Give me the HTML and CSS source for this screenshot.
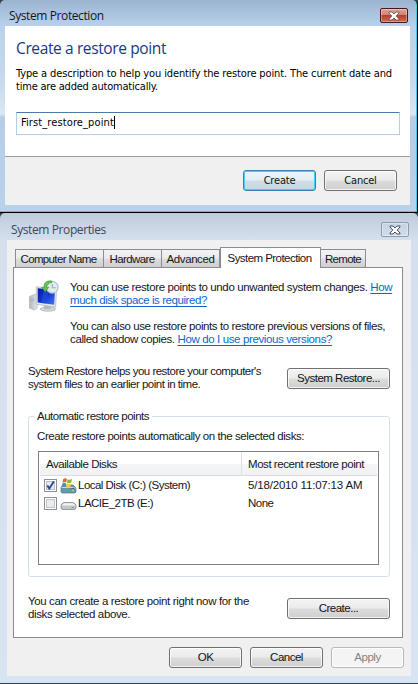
FILE: index.html
```html
<!DOCTYPE html>
<html lang="en">
<head>
<meta charset="utf-8">
<title>System Protection</title>
<link rel="stylesheet" href="styles.css">
</head>
<body>
<section class="dialog">
  <header class="titlebar">
    <span class="title">System Protection</span>
    <span class="close close-red"><svg width="12" height="10" viewBox="0 0 12 10"><path d="M1 1h3l2 2 2-2h3v1L8.200 5 11 8v1H8L6 7 4 9H1V8l2.800-3L1 2z" fill="#fff" stroke="#644c50" stroke-width=".8"/></svg></span>
  </header>
  <div class="dialog-body">
    <h1>Create a restore point</h1>
    <p class="intro"><span class="intro-a">Type a description to help you identify the restore point. The current date and</span><span class="intro-b">time are added automatically.</span></p>
    <div class="field"><span>First_restore_point</span><i class="caret"></i></div>
  </div>
  <footer class="dialog-foot">
    <button class="btn primary">Create</button>
    <button class="btn">Cancel</button>
  </footer>
</section>
<section class="props">
  <header class="titlebar inactive">
    <span class="title">System Properties</span>
    <span class="close"><svg width="12" height="10" viewBox="0 0 12 10"><path d="M1 1h3l2 2 2-2h3v1L8.200 5 11 8v1H8L6 7 4 9H1V8l2.800-3L1 2z" fill="#fff" stroke="#3f4a5a" stroke-width=".95"/></svg></span>
  </header>
  <div class="client">
    <nav class="tabs">
      <span class="tab tab-name">Computer Name</span><span class="tab tab-hw">Hardware</span><span class="tab tab-adv">Advanced</span><span class="tab active">System Protection</span><span class="tab tab-rem">Remote</span>
    </nav>
    <main class="panel">
      <div class="about">
        <svg class="restore-icon" width="32" height="32" viewBox="0 0 32 33">
          <defs>
            <linearGradient id="scr" x1="0" y1="0" x2="1" y2="1"><stop offset="0" stop-color="#0719a0"/><stop offset=".5" stop-color="#1237d2"/><stop offset="1" stop-color="#477cf0"/></linearGradient>
            <linearGradient id="cs" x1="0" y1="0" x2="1" y2="0"><stop offset="0" stop-color="#b4b8bc"/><stop offset="1" stop-color="#e5e7e9"/></linearGradient>
          </defs>
          <path d="M1 17l8-3v15l-3 2-5-2z" fill="url(#cs)" stroke="#a5aaae" stroke-width=".6"/>
          <path d="M2 20l4-1M2 22l4-1" stroke="#8b9094" stroke-width=".5"/>
          <ellipse cx="20" cy="30" rx="8" ry="2.200" fill="#d3d7da" stroke="#9aa1a7" stroke-width=".6"/>
          <path d="M16 26h7v4h-7z" fill="#b5babf"/>
          <path d="M8 7l21 2-1 19L8 25z" fill="#e2e7ea" stroke="#a9b2b9" stroke-width=".7"/>
          <path d="M9.500 8.500l17.800 1.800-.8 15.300L9.500 23.200z" fill="url(#scr)"/>
          <path d="M16 9.200l5 .6-3 14.400-5-.6z" fill="#274fdd" opacity=".55"/>
          <circle cx="24.500" cy="7.500" r="6" fill="#e2ebef" stroke="#b4c4cd" stroke-width="1.300"/>
          <path d="M24.500 4v4h3.500" fill="none" stroke="#8fa7b6" stroke-width="1"/>
          <path d="M24 1C18 0 15.500 4 16 7.500h-2.500l3.700 4.500 3.800-4.500h-2.500C19 5 21 3 24 2.500z" fill="#62c452" stroke="#35912f" stroke-width=".6"/>
        </svg>
        <div class="about-text">
          <p><span class="u1">You can use restore points to undo unwanted system changes. <a>How</a></span><span class="u2"><a>much disk space is required?</a></span></p>
          <p><span class="u3">You can also use restore points to restore previous versions of files,</span><span class="u4">called shadow copies. <a>How do I use previous versions?</a></span></p>
        </div>
      </div>
      <div class="action">
        <p><span class="s1">System Restore helps you restore your computer's</span><span class="s2">system files to an earlier point in time.</span></p>
        <button class="btn wide">System Restore...</button>
      </div>
      <fieldset class="group">
        <legend>Automatic restore points</legend>
        <p class="group-note">Create restore points automatically on the selected disks:</p>
        <div class="list">
          <div class="row head"><span>Available Disks</span><span>Most recent restore point</span></div>
          <div class="row">
            <span class="disk"><svg class="check" width="13" height="13" viewBox="0 0 13 13"><rect x=".5" y=".5" width="12" height="12" fill="#fff" stroke="#8e8f8f"/><rect x="2.500" y="2.500" width="8" height="8" fill="#e5ebf2" stroke="#b6bfca"/><path d="M3.300 6.500l2 3 4.500-7" fill="none" stroke="#2d4792" stroke-width="1.900"/></svg><svg class="drive" width="17" height="17" viewBox="0 0 17 17"><path d="M1 10l2-2h10l3 3v4l-1 1H2l-1-1z" fill="#6797ab" stroke="#49788e" stroke-width=".7"/><path d="M1.500 10.500h12l2 1" stroke="#bddce5" stroke-width="1"/><path d="M3 2.500Q5 .5 7 2L6.300 5.500Q4.500 4.500 2.400 6z" fill="#e96a31"/><path d="M7.600 2.300Q10 3.600 12 1.800L11.300 5.600Q9 7 6.900 5.700z" fill="#7eba3f"/><path d="M2.300 6.700Q4.400 5.200 6.100 6.300L5.300 10Q3.500 8.600 1.500 10z" fill="#4390cf"/><path d="M6.700 6.500Q9 7.700 11.100 6.400L10.300 10.200Q8 11.300 5.900 10z" fill="#f6c93b"/><path d="M12 13.500h2" stroke="#8ee454" stroke-width="1.300"/></svg><span>Local Disk (C:) (System)</span></span>
            <span class="date">5/18/2010 11:07:13 AM</span>
          </div>
          <div class="row">
            <span class="disk"><svg class="check" width="13" height="13" viewBox="0 0 13 13"><rect x=".5" y=".5" width="12" height="12" fill="#fff" stroke="#8e8f8f"/><rect x="2.500" y="2.500" width="8" height="8" fill="#e9ebed" stroke="#c2c5c9"/></svg><svg class="drive" width="17" height="17" viewBox="0 0 17 17"><path d="M1 10.500Q1 9 4 7.500h9q3 1.500 3 3v2q0 2-2 2H3q-2 0-2-2z" fill="#c4c7c9" stroke="#84898c" stroke-width=".8"/><path d="M1.800 10.500Q2 9.500 4.300 8.300h8.400q2.300 1.200 2.500 2.200z" fill="#f1f2f2"/><path d="M11.500 12.500h2.500" stroke="#75a958" stroke-width="1"/></svg><span>LACIE_2TB (E:)</span></span>
            <span>None</span>
          </div>
        </div>
      </fieldset>
      <div class="action bottom">
        <p><span class="c1">You can create a restore point right now for the</span><span class="c1">disks selected above.</span></p>
        <button class="btn wide">Create...</button>
      </div>
    </main>
    <footer class="props-foot">
      <button class="btn">OK</button>
      <button class="btn">Cancel</button>
      <button class="btn disabled" disabled>Apply</button>
    </footer>
  </div>
</section>
</body>
</html>
```
FILE: styles.css
```css
* { box-sizing: border-box; }
body { margin: 0; width: 418px; height: 684px; overflow: hidden; background: #33404f; color: #15151c; }
p, h1, fieldset, legend { margin: 0; padding: 0; border: 0; }
p > span { display: block; white-space: nowrap; }

.titlebar { display: flex; justify-content: space-between; }
.title { font: 12px/16px "Open Sans", sans-serif; letter-spacing: -0.4px; white-space: nowrap; }
.close { display: flex; align-items: center; justify-content: center; width: 28px; height: 15px; border: 1px solid #8795a8; border-radius: 2px; box-shadow: inset 0 0 0 1px rgba(255,255,255,.35); }
.close-red { border-color: #48161b; background: linear-gradient(#dfa398, #d38172 47%, #b5402c 50%, #cd6a50); }

.dialog { height: 213px; padding: 0 7px 6px 5px; border-right: 1px solid #000; border-bottom: 1px solid #000; border-radius: 5px 5px 0 0; background: linear-gradient(#9bb4d1, #b9d1ea 26px, #c8dbee 85px, #dbe7f3 114px, #b7cde6 117px, #b9d1ea); box-shadow: inset -1px -1px #43c8dc; }
.dialog .titlebar { height: 26px; padding: 8px 2px 0 4px; }
.dialog-body { height: 130px; padding: 11px 10px 0 11px; background: #fff; }
h1 { font: 15.5px/22px "Open Sans", sans-serif; letter-spacing: -0.38px; color: #133a88; }
.intro { margin-top: 8px; font: 11px/13px "DejaVu Sans Condensed", sans-serif; color: #000; }
.intro-a { letter-spacing: -0.123px; }
.intro-b { letter-spacing: -0.21px; }
.field { display: flex; align-items: flex-start; height: 23px; margin-top: 19px; padding: 2px 0 0 4px; border: 1px solid #b5cfe7; border-top-color: #4b7ba8; font: 11px/15px "DejaVu Sans Condensed", sans-serif; letter-spacing: 0.11px; color: #000; }
.caret { width: 1px; height: 13px; margin-top: 1px; background: #000; }
.dialog-foot { display: flex; justify-content: flex-end; gap: 8px; height: 49px; padding: 13px 13px 0 0; border-top: 1px solid #9c9c9c; background: #f0f0f0; }

.btn { width: 73px; height: 21px; padding: 0 0 1px; border: 1px solid #707070; border-radius: 3px; background: linear-gradient(#f3f3f3, #ebebeb 48%, #dcdcdc 52%, #cfcfcf); box-shadow: inset 0 0 0 1px rgba(255,255,255,.75); font: 11.5px/18px "Liberation Sans", sans-serif; letter-spacing: -0.5px; color: #111; text-align: center; }
.dialog .btn { padding: 1px 0 0; font: 11px/18px "DejaVu Sans Condensed", sans-serif; letter-spacing: -0.2px; }
.dialog .primary { border-color: #3c7fb1; box-shadow: inset 0 0 0 1px #48d0f4; background: linear-gradient(#eef5f8, #e3eef3 48%, #d1dfe5 52%, #c5d6de); }
.wide { width: 103px; flex: none; }
.disabled { border-color: #b5b8bc; background: #f4f4f4; color: #838383; }

.props { height: 470px; padding: 0 7px 7px; border-radius: 5px 5px 0 0; background: linear-gradient(#bfcadb, #d5e0ee 27px, #d7e4f2); }
.inactive { height: 27px; padding: 9px 2px 0 4px; }
.inactive .title { color: #3c4858; }
.inactive .close { border-color: #8f9bad; }
.client { height: 436px; padding: 7px 8px 0 6px; background: #f0f0f0; font: 11.5px/13px "Liberation Sans", sans-serif; }
.tabs { display: flex; align-items: flex-end; height: 20px; padding-left: 2px; }
.tab { height: 18px; border: 1px solid #898c95; border-bottom: 0; border-left-width: 0; background: linear-gradient(#f2f2f2, #ebebeb 48%, #dddddd 52%, #cfcfcf); line-height: 18px; text-align: center; white-space: nowrap; }
.tab-name { width: 89px; padding-right: 2px; border-left-width: 1px; letter-spacing: -0.64px; }
.tab-hw { width: 58px; padding-right: 1px; letter-spacing: -0.6px; }
.tab-adv { width: 58px; letter-spacing: -0.4px; }
.tab.active { z-index: 1; width: 101px; height: 21px; margin-bottom: -1px; padding-right: 2px; border-left-width: 1px; background: #fff; line-height: 20px; letter-spacing: -0.55px; }
.tab-rem { width: 45px; letter-spacing: -0.7px; }
.panel { height: 371px; padding: 12px 12px 0 14px; border: 1px solid #898c95; background: #fff; }
.about { display: flex; gap: 10px; }
.restore-icon { flex: none; }
.about-text { padding-top: 1px; }
.about-text p + p { margin-top: 13px; }
a { color: #0868cc; text-decoration: underline; text-underline-offset: 2px; }
.u1 { letter-spacing: -0.38px; }
.u2 { letter-spacing: -0.43px; }
.u3 { letter-spacing: -0.415px; }
.u4 { letter-spacing: -0.375px; }
.action { display: flex; justify-content: space-between; margin-top: 19px; }
.action .wide { margin-top: 3px; }
.s1 { letter-spacing: -0.52px; }
.s2 { letter-spacing: -0.49px; }
.c1 { letter-spacing: -0.37px; }
.group { height: 167px; margin-top: 19px; padding: 0 10px 0 9px; border: 1px solid #d5dfe5; border-radius: 3px; min-width: 0; }
legend { margin-left: -4px; padding: 0 3px; letter-spacing: -0.5px; }
.group-note { margin: 7px 0 0 -1px; letter-spacing: -0.42px; white-space: nowrap; }
.list { height: 114px; margin-top: 8px; border: 1px solid #7b8087; }
.row { display: grid; grid-template-columns: 202px 1fr; align-items: center; height: 17.5px; letter-spacing: -0.52px; white-space: nowrap; }
.row > span:last-child { padding-left: 7px; }
.row.head { grid-template-columns: 201px 1fr; height: 24px; margin: 0 1px 1px; border-bottom: 1px solid #d8dadd; background: linear-gradient(#fff 50%, #f4f5f7 52%, #f1f2f4); letter-spacing: -0.45px; }
.head > span { padding: 2px 0 0 6px; height: 23px; line-height: 21px; }
.head > span:last-child { padding-left: 6px; border-left: 1px solid #dfe1e4; }
.row .date { letter-spacing: -0.18px; }
.disk { display: flex; align-items: center; padding-left: 5px; }
.drive { margin: 0 1px 0 3px; }
.action.bottom { margin-top: 18px; }
.props-foot { display: flex; justify-content: flex-end; gap: 8px; padding-top: 9px; margin-right: -1px; }
```
